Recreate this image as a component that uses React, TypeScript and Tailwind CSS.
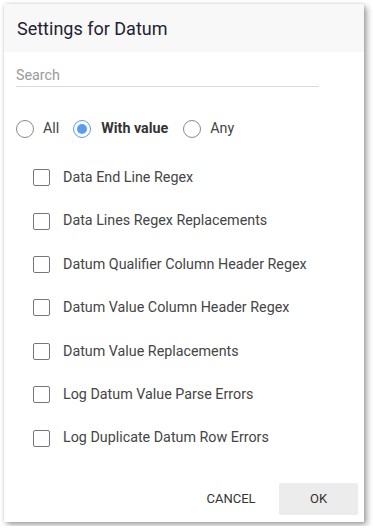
import React from "react";

const items = [
  "Data End Line Regex",
  "Data Lines Regex Replacements",
  "Datum Qualifier Column Header Regex",
  "Datum Value Column Header Regex",
  "Datum Value Replacements",
  "Log Datum Value Parse Errors",
  "Log Duplicate Datum Row Errors",
];

function Radio({ checked }: { checked?: boolean }) {
  return (
    <span
      className={
        "flex h-[18px] w-[18px] items-center justify-center rounded-full border-[1.5px] " +
        (checked ? "border-[#5b9bf2]" : "border-[#8a8a8a]")
      }
    >
      {checked && <span className="h-[10px] w-[10px] rounded-full bg-[#5b9bf2]" />}
    </span>
  );
}

export default function App() {
  return (
    <div className="bg-white p-[4px]" style={{ fontFamily: "Roboto, 'Liberation Sans', sans-serif" }}>
      <div className="flex h-[518px] w-[360px] flex-col bg-white shadow-[3px_3px_6px_rgba(0,0,0,0.35),0_0_3px_rgba(0,0,0,0.15)]">
        <div className="flex h-[48px] items-center bg-[#f8f8f8] pl-[13px] text-[18px] text-[#1f2233]">
          Settings for Datum
        </div>
        <div className="flex flex-1 flex-col px-[12px]">
          <div className="mt-[11px] flex h-[24px] w-[303px] items-center border-b border-[#dcdcdc] pt-[3px] text-[14.3px] text-[#9a9a9a]">
            Search
          </div>
          <div className="mt-[22px] flex h-[40px] items-center text-[14.3px] text-[#444]">
            <Radio />
            <span className="ml-[9px]">All</span>
            <span className="ml-[14px]"><Radio checked /></span>
            <span className="ml-[10px] font-bold text-[#333]">With value</span>
            <span className="ml-[15px]"><Radio /></span>
            <span className="ml-[9px]">Any</span>
          </div>
          <div className="mt-[7px] flex flex-col">
            {items.map((t) => (
              <div key={t} className="flex h-[43.4px] items-center pl-[17px] text-[14.3px] text-[#454545]">
                <span className="h-[17px] w-[17px] rounded-[2px] border-[1.5px] border-[#777]" />
                <span className="ml-[13px]">{t}</span>
              </div>
            ))}
          </div>
          <div className="mt-auto mb-[7px] flex justify-end gap-[9px] text-[13px] text-[#333]">
            <button className="h-[32px] w-[78px] uppercase">Cancel</button>
            <button className="mr-[-6px] h-[32px] w-[79px] rounded-[2px] bg-[#ececec] uppercase">OK</button>
          </div>
        </div>
      </div>
    </div>
  );
}
